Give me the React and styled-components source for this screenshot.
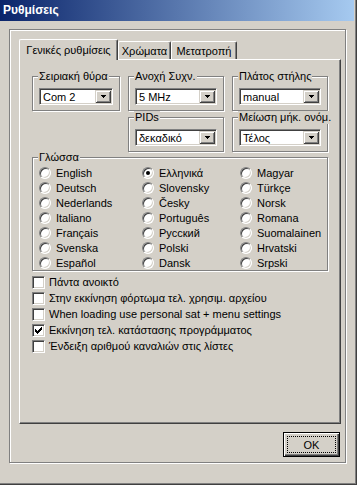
import React from 'react';
import styled, { createGlobalStyle } from 'styled-components';

const Global = createGlobalStyle`
  html, body { margin: 0; padding: 0; background: #D4D0C8; }
  body { font-family: "Liberation Sans", Arial, sans-serif; font-size: 11px; color: #000; }
  * { box-sizing: border-box; }
`;

const Window = styled.div`
  width: 357px;
  height: 485px;
  background: #D4D0C8;
  box-shadow: inset -1px -1px 0 #404040, inset -2px -2px 0 #808080;
  display: flex;
  flex-direction: column;
  font-family: "Liberation Sans", Arial, sans-serif;
  font-size: 11px;
`;

const TitleBar = styled.div`
  flex: none;
  width: 354px;
  height: 21px;
  padding-left: 3px;
  background: linear-gradient(to right, #0A246A, #A6CAF0);
  color: #fff;
  font-weight: bold;
  font-size: 12px;
  line-height: 21px;
`;

const Frame = styled.div`
  margin: 8px 0 0 9px;
  width: 337px;
  height: 434px;
  border: 1px solid #808080;
  box-shadow: inset 1px 1px 0 #fff, 1px 1px 0 #fff;
  padding: 9px 0 0 9px;
  display: flex;
  flex-direction: column;
`;

const TabStrip = styled.div`
  display: flex;
  align-items: flex-end;
  height: 20px;
`;

const Tab = styled.div`
  position: relative;
  z-index: ${p => (p.$active ? 2 : 0)};
  width: ${p => p.$w}px;
  height: ${p => (p.$active ? 21 : 18)}px;
  margin-bottom: ${p => (p.$active ? -1 : 0)}px;
  padding-bottom: ${p => (p.$active ? 1 : 0)}px;
  background: #D4D0C8;
  border-top: 1px solid #fff;
  border-left: 1px solid #fff;
  border-right: 1px solid #404040;
  box-shadow: inset -1px 0 0 #808080;
  border-radius: 2px 2px 0 0;
  display: flex;
  align-items: center;
  justify-content: center;
  white-space: nowrap;
`;

const Panel = styled.div`
  width: 322px;
  height: 365px;
  border-top: 1px solid #fff;
  border-left: 1px solid #fff;
  border-right: 1px solid #404040;
  border-bottom: 1px solid #404040;
  box-shadow: inset -1px -1px 0 #808080;
  padding: 16px 0 0 12px;
  display: flex;
  flex-direction: column;
`;

const GroupGrid = styled.div`
  display: grid;
  grid-template-columns: 88px 96px 96px;
  column-gap: 8px;
  row-gap: 6px;
`;

const Group = styled.div`
  position: relative;
  grid-column: ${p => p.$col || 'auto'};
  border: 1px solid #808080;
  box-shadow: inset 1px 1px 0 #fff, 1px 1px 0 #fff;
  padding: 11px 6px 5px 6px;
`;

const LangGroup = styled(Group)`
  width: 296px;
  margin-top: 5px;
  padding: 7px 0 0 6px;
`;

const Caption = styled.span`
  position: absolute;
  top: -7px;
  left: 5px;
  padding: 0 1px;
  background: #D4D0C8;
  line-height: 13px;
  white-space: nowrap;
`;

const SelectBox = styled.div`
  height: 17px;
  background: #fff;
  border-style: solid;
  border-width: 1px;
  border-color: #808080 #fff #fff #808080;
  box-shadow: inset 1px 1px 0 #404040, inset -1px -1px 0 #D4D0C8;
  padding: 1px;
  display: flex;
`;

const SelectText = styled.span`
  flex: 1;
  padding-left: 2px;
  display: flex;
  align-items: center;
  white-space: nowrap;
  overflow: hidden;
`;

const DropButton = styled.span`
  flex: none;
  width: 16px;
  background: #D4D0C8;
  box-shadow: inset 1px 1px 0 #D4D0C8, inset -1px -1px 0 #404040,
    inset 2px 2px 0 #fff, inset -2px -2px 0 #808080;
  display: flex;
  align-items: center;
  justify-content: center;
`;

const RadioGrid = styled.div`
  display: grid;
  grid-template-columns: 103px 98px 1fr;
  grid-template-rows: repeat(7, 15px);
  grid-auto-flow: column;
`;

const OptionRow = styled.label`
  display: flex;
  align-items: center;
  gap: ${p => p.$gap || 5}px;
  height: ${p => p.$h || 15}px;
  white-space: nowrap;
`;

const RadioCircle = styled.span`
  flex: none;
  width: 12px;
  height: 12px;
  border-radius: 50%;
  border: 1px solid;
  border-color: #808080 #fff #fff #808080;
  box-shadow: inset 1px 1px 0 #404040, inset -1px -1px 0 #D4D0C8;
  background: #fff;
  display: flex;
  align-items: center;
  justify-content: center;
`;

const RadioDot = styled.span`
  width: 4px;
  height: 4px;
  border-radius: 50%;
  background: #000;
`;

const CheckList = styled.div`
  margin-top: 3px;
  display: flex;
  flex-direction: column;
`;

const CheckBox = styled.span`
  flex: none;
  width: 13px;
  height: 13px;
  background: #fff;
  border: 1px solid;
  border-color: #808080 #fff #fff #808080;
  box-shadow: inset 1px 1px 0 #404040, inset -1px -1px 0 #D4D0C8;
  padding: 2px;
  display: flex;
`;

const Footer = styled.div`
  width: 322px;
  margin-top: 8px;
  display: flex;
  justify-content: flex-end;
`;

const Button = styled.button`
  width: 57px;
  height: 25px;
  margin-right: 1px;
  padding: 3px;
  font: inherit;
  color: #000;
  background: #D4D0C8;
  border: 1px solid #000;
  box-shadow: inset 1px 1px 0 #fff, inset -1px -1px 0 #404040, inset -2px -2px 0 #808080;
  display: flex;
`;

const FocusRing = styled.span`
  flex: 1;
  border: 1px dotted #000;
  display: flex;
  align-items: center;
  justify-content: center;
`;

const Arrow = () => (
  <svg width="5" height="3" viewBox="0 0 5 3" shapeRendering="crispEdges">
    <path d="M0 0h5v1h-1v1h-1v1h-1v-1h-1v-1h-1z" fill="#000" />
  </svg>
);

const CheckMark = () => {
  const tops = [2, 3, 4, 3, 2, 1, 0];
  return (
    <svg width="7" height="7" viewBox="0 0 7 7" shapeRendering="crispEdges">
      {tops.map((t, i) => (
        <rect key={i} x={i} y={t} width="1" height="3" fill="#000" />
      ))}
    </svg>
  );
};

const Select = ({ value }) => (
  <SelectBox>
    <SelectText>{value}</SelectText>
    <DropButton>
      <Arrow />
    </DropButton>
  </SelectBox>
);

const Radio = ({ label, checked }) => (
  <OptionRow>
    <RadioCircle>{checked && <RadioDot />}</RadioCircle>
    <span>{label}</span>
  </OptionRow>
);

const Check = ({ label, checked }) => (
  <OptionRow $h={16} $gap={4}>
    <CheckBox>{checked && <CheckMark />}</CheckBox>
    <span>{label}</span>
  </OptionRow>
);

const languages = [
  'English', 'Deutsch', 'Nederlands', 'Italiano', 'Français', 'Svenska', 'Español',
  'Ελληνικά', 'Slovensky', 'Česky', 'Português', 'Русский', 'Polski', 'Dansk',
  'Magyar', 'Türkçe', 'Norsk', 'Romana', 'Suomalainen', 'Hrvatski', 'Srpski',
];

const checks = [
  { label: 'Πάντα ανοικτό', checked: false },
  { label: 'Στην εκκίνηση φόρτωμα τελ. χρησιμ. αρχείου', checked: false },
  { label: 'When loading use personal sat + menu settings', checked: false },
  { label: 'Εκκίνηση τελ. κατάστασης προγράμματος', checked: true },
  { label: 'Ένδειξη αριθμού καναλιών στις λίστες', checked: false },
];

export default function App() {
  return (
    <>
      <Global />
      <Window>
        <TitleBar>Ρυθμίσεις</TitleBar>
        <Frame>
          <TabStrip>
            <Tab $active $w={99}>Γενικές ρυθμίσεις</Tab>
            <Tab $w={53}>Χρώματα</Tab>
            <Tab $w={66}>Μετατροπή</Tab>
          </TabStrip>
          <Panel>
            <GroupGrid>
              <Group>
                <Caption>Σειριακή θύρα</Caption>
                <Select value="Com 2" />
              </Group>
              <Group>
                <Caption>Ανοχή Συχν.</Caption>
                <Select value="5 MHz" />
              </Group>
              <Group>
                <Caption>Πλάτος στήλης</Caption>
                <Select value="manual" />
              </Group>
              <Group $col={2}>
                <Caption>PIDs</Caption>
                <Select value="δεκαδικό" />
              </Group>
              <Group $col={3}>
                <Caption>Μείωση μήκ. ονόμ.</Caption>
                <Select value="Τέλος" />
              </Group>
            </GroupGrid>
            <LangGroup>
              <Caption>Γλώσσα</Caption>
              <RadioGrid>
                {languages.map(l => (
                  <Radio key={l} label={l} checked={l === 'Ελληνικά'} />
                ))}
              </RadioGrid>
            </LangGroup>
            <CheckList>
              {checks.map(c => (
                <Check key={c.label} label={c.label} checked={c.checked} />
              ))}
            </CheckList>
          </Panel>
          <Footer>
            <Button>
              <FocusRing>OK</FocusRing>
            </Button>
          </Footer>
        </Frame>
      </Window>
    </>
  );
}
